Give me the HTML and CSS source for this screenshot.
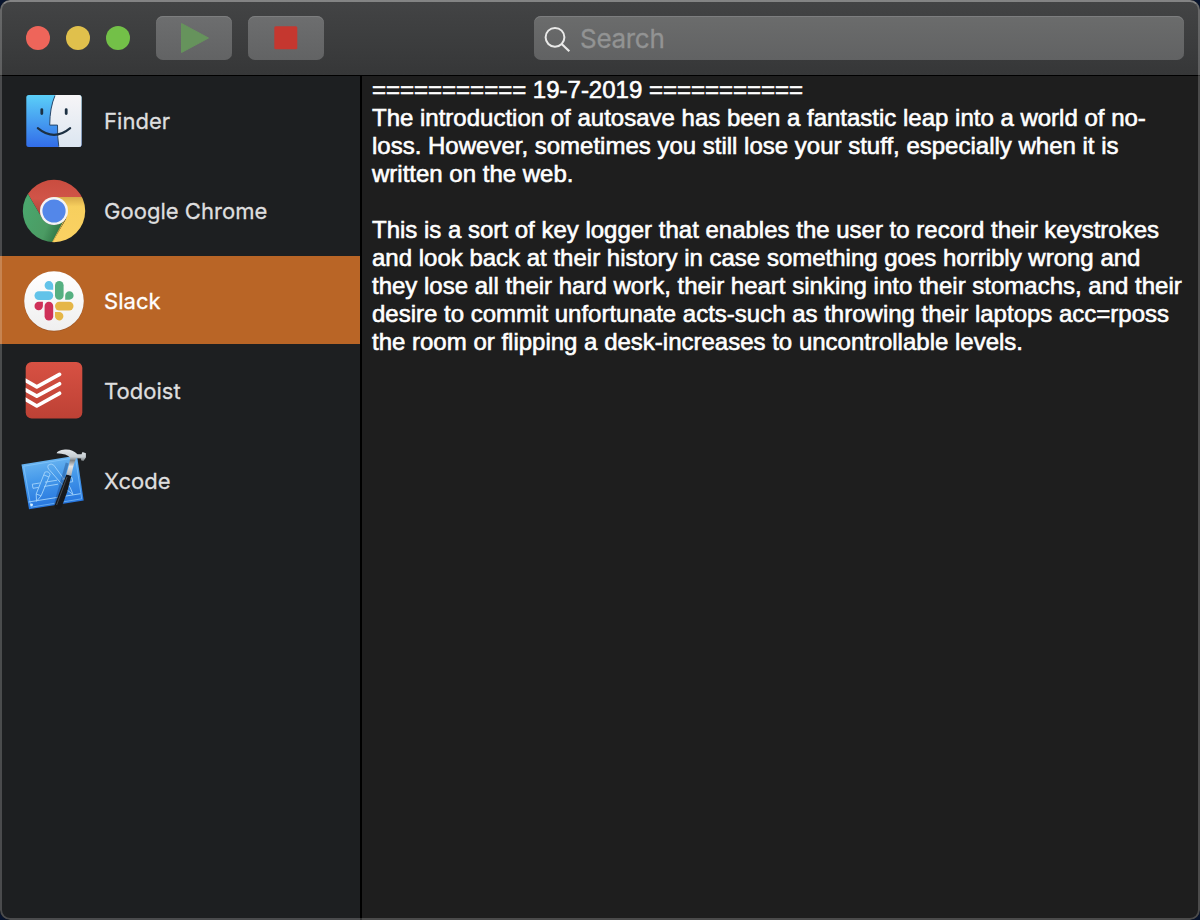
FILE: index.html
```
<!DOCTYPE html>
<html lang="en">
<head>
<meta charset="utf-8">
<title>Keystroke history</title>
<link rel="stylesheet" href="styles.css">
</head>
<body>
<main class="window">
  <header class="toolbar">
    <div class="lights"><i class="light red"></i><i class="light yellow"></i><i class="light green"></i></div>
    <button class="tool" aria-label="Record"><svg width="76" height="44" viewBox="0 0 76 44"><path d="M25.5 7.5 52.5 22 25.5 36.5Z" fill="#66935c" stroke="#66935c" stroke-linejoin="round"/></svg></button>
    <button class="tool" aria-label="Stop"><svg width="76" height="44" viewBox="0 0 76 44"><rect x="26.3" y="10.3" width="23" height="23" rx="1.5" fill="#c5372f"/></svg></button>
    <div class="search">
      <svg width="46" height="44" viewBox="0 0 46 44" fill="none" stroke="#e9e9e8" stroke-width="2"><circle cx="21" cy="21.3" r="9.4"/><path d="m27.7 28 7.6 7.3" stroke-width="2.2"/></svg>
      <span class="placeholder">Search</span>
    </div>
  </header>
  <div class="content">
    <nav class="sidebar">
      <div class="app">
        <svg class="icon" viewBox="0 0 80 80">
          <defs><linearGradient id="fb" x1="0" y1="0" x2="0" y2="1"><stop stop-color="#5bcff8"/><stop offset="1" stop-color="#326de9"/></linearGradient><linearGradient id="fw" x1="0" y1="0" x2="0" y2="1"><stop stop-color="#f6f5f7"/><stop offset="1" stop-color="#dce6f1"/></linearGradient></defs>
          <g transform="translate(0 .6)">
          <rect x="12.3" y="14.3" width="55.2" height="52" rx="2.5" fill="url(#fb)"/>
          <path d="M41.2 14.3H65q2.5 0 2.5 2.5v47q0 2.5-2.5 2.5H44.8q-1.5-9-1.3-21.8h-7.8q.2-18 5.5-30.2Z" fill="url(#fw)"/>
          <path d="M41 15Q35.8 27 35.700 44.500H43.500Q43.300 57 44.800 66" fill="none" stroke="#27476b" stroke-width="1"/>
          <path d="M23.800 47.500Q40 61 56.200 47.500" fill="none" stroke="#1c3043" stroke-width="2.1" stroke-linecap="round"/>
          <path d="M27.800 29v4M52.200 29v4" stroke="#1c3043" stroke-width="2.800" stroke-linecap="round"/>
          </g>
        </svg><span>Finder</span></div>
      <div class="app">
        <svg class="icon" viewBox="0 0 80 80">
          <defs><clipPath id="cc"><circle cx="40" cy="41" r="31.2"/></clipPath>
          <linearGradient id="cr" x1="0" y1="0" x2="0" y2="1"><stop stop-color="#c94c3f"/><stop offset=".5" stop-color="#d05448"/><stop offset="1" stop-color="#a74439"/></linearGradient>
          <linearGradient id="cg" x1="0" y1="0" x2="1" y2=".45"><stop stop-color="#4aaa70"/><stop offset=".75" stop-color="#4b9b63"/><stop offset="1" stop-color="#337a49"/></linearGradient>
          <linearGradient id="cy" x1="0" y1="0" x2="0" y2="1"><stop stop-color="#d7a949"/><stop offset=".2" stop-color="#f7cf5e"/><stop offset="1" stop-color="#fbd263"/></linearGradient></defs>
          <g clip-path="url(#cc)"><path d="M8 9H72V27H40L28 48 14 24Z" fill="url(#cr)"/><path d="M14 24 28 48Q33 56 43 55L50 50 37 75H5V24Z" fill="url(#cg)"/><path d="M40 27H75V75H37L38 73 52 49Q55 36 40 27Z" fill="url(#cy)"/><path d="M52 47 37 75" stroke="#d9b34f" stroke-width="1"/></g>
          <circle cx="40" cy="41" r="14" fill="#f4f4f4"/><circle cx="40" cy="41" r="11.600" fill="#5387e9"/>
        </svg><span>Google Chrome</span></div>
      <div class="app selected">
        <svg class="icon" viewBox="0 0 80 80">
          <defs><linearGradient id="sw" x1="0" y1="0" x2="0" y2="1"><stop stop-color="#fff"/><stop offset="1" stop-color="#efefef"/></linearGradient></defs>
          <circle cx="40" cy="41.500" r="30" fill="#8c4a20" opacity=".6"/><circle cx="40" cy="41" r="29.800" fill="url(#sw)"/>
          <g fill="#62c3e9"><rect x="20.500" y="31.300" width="18.700" height="8.600" rx="4.300"/><path d="M39.200 29.700V25.500a4.300 4.300 0 1 0-4.300 4.200Z"/></g>
          <g fill="#55b081"><rect x="41" y="21" width="8.600" height="18.700" rx="4.300"/><path d="M51.200 39.700h4a4.200 4.200 0 1 0-4-4.200Z"/></g>
          <g fill="#e5b647"><rect x="41" y="41.800" width="18.500" height="8.600" rx="4.300"/><path d="M41 52v4.100a4.200 4.200 0 1 0 4.200-4.100Z"/></g>
          <g fill="#cf3159"><rect x="30.600" y="41.800" width="8.600" height="18.700" rx="4.300"/><path d="M28.900 41.800h-4.100a4.200 4.200 0 1 0 4.100 4.200Z"/></g>
        </svg><span>Slack</span></div>
      <div class="app">
        <svg class="icon" viewBox="0 0 80 80">
          <defs><linearGradient id="tr" x1="0" y1="0" x2="0" y2="1"><stop stop-color="#d75143"/><stop offset="1" stop-color="#bd4135"/></linearGradient><clipPath id="tc"><rect x="11.700" y="12" width="56.600" height="56.600" rx="6"/></clipPath></defs>
          <rect x="11.700" y="12" width="56.600" height="56.600" rx="6" fill="url(#tr)"/><g clip-path="url(#tc)" fill="none" stroke="#fff" stroke-width="3.700" stroke-linejoin="round" stroke-linecap="round"><path d="M10 29.600 22.800 36.800 45.500 24.400M10 39 22.800 46.200 45.500 33.800M10 48.600 22.800 56 45.500 43.300"/></g>
        </svg><span>Todoist</span></div>
      <div class="app">
        <svg class="icon" viewBox="0 0 80 80">
          <defs><linearGradient id="xb" x1="0" y1="0" x2=".2" y2="1"><stop stop-color="#77bff3"/><stop offset=".5" stop-color="#4498ea"/><stop offset="1" stop-color="#2675de"/></linearGradient><linearGradient id="xh" x1="0" y1="0" x2="0" y2="1"><stop stop-color="#e3e7ea"/><stop offset=".28" stop-color="#c6cdd2"/><stop offset=".42" stop-color="#7d8387"/><stop offset=".65" stop-color="#e2e3e3"/><stop offset="1" stop-color="#a9adaf"/></linearGradient></defs>
          <path d="M7.500 24.500 63 15.500 69.700 60.500 15 69.300Z" fill="url(#xb)"/><path d="M9.700 26.200 61.500 17.700 67.700 58.800 17 67.200Z" fill="none" stroke="#8dccff" stroke-width=".6"/>
          <g fill="none" stroke="#a4d4fa" stroke-width=".9"><path d="m14.500 62 52-8.300M18.300 44.200l7.500-1.200M31 42.200l12-2M48 39.200l10-1.500.7 4-8 1.300M44 44.200l-14 2.300M24.500 47.400l-5.500.9-.7-4.100"/><path d="M30.800 32.200 22.200 54l.3 7.300 4.600-5.500 9-21.600q-1.500-3.500-5.300-2ZM30 35l5 2M22.200 54l4.900 1.800"/><path d="M34.200 25.200q3-2.400 5.600 0L56.200 47.500 59 54.500 53 50 34.600 29q-1.500-2-.4-3.800Z"/></g><circle cx="17.600" cy="64.800" r="1.400" fill="#d6efff"/>
          <path d="m53.200 23-12 42" stroke="#143a73" stroke-width="3" opacity=".35"/>
          <path d="m52.300 34.500 5 1.200Q54 52 47.500 67.500q-1.500 2.500-4.500 1.500t-2.300-4Z" fill="#17191d"/><path d="M53 37 42.600 65" stroke="#4c5157" stroke-width=".9" fill="none"/>
          <path d="M42.600 13.200Q43 10.500 51 9.500q7.500-.5 12.500 4.700l4 .1 1-2.200 3.400 1.100v4.300l-2.500 3.500-2.400-.7.200-1.900-5-.2Q59.500 24 57.300 35.700l-5-1.200Q55 26 56.300 18 53 13.500 42.600 13.200Z" fill="url(#xh)"/>
        </svg><span>Xcode</span></div>
    </nav>
    <article class="log">
      <div>=========== 19-7-2019 ===========</div>
      <div>The introduction of autosave has been a fantastic leap into a world of no-</div>
      <div>loss. However, sometimes you still lose your stuff, especially when it is</div>
      <div>written on the web.</div>
      <div>&nbsp;</div>
      <div>This is a sort of key logger that enables the user to record their keystrokes</div>
      <div>and look back at their history in case something goes horribly wrong and</div>
      <div>they lose all their hard work, their heart sinking into their stomachs, and their</div>
      <div>desire to commit unfortunate acts-such as throwing their laptops acc=rposs</div>
      <div>the room or flipping a desk-increases to uncontrollable levels.</div>
    </article>
  </div>
</main>
</body>
</html>
```
FILE: styles.css
```
* { box-sizing: border-box; }
body { margin: 0; background: #08142d; overflow: hidden; }
.window {
  position: relative; width: 1200px; height: 920px; overflow: hidden;
  border-radius: 10px;
  background: #1e1e1e; display: flex; flex-direction: column;
}
/* Translucent window rim, drawn over the content */
.window::after {
  content: ""; position: absolute; inset: 0; pointer-events: none;
  border: 2px solid rgba(255, 255, 255, .2); border-top-color: rgba(255, 255, 255, .34);
  border-radius: 10px;
}
.toolbar {
  height: 76px; flex: none; display: flex; align-items: flex-start;
  padding: 16px 16px 0 26px; border-bottom: 1px solid #000;
  background: linear-gradient(#434445, #363738);
}
.lights { display: flex; gap: 16px; padding-top: 10px; margin-right: 26px; }
.light { width: 24px; height: 24px; border-radius: 50%; }
.red { background: #ee655a; }
.yellow { background: #e0c04c; }
.green { background: #73c048; }
.tool, .search {
  height: 44px; border: 0; border-radius: 7px; padding: 0;
  background: linear-gradient(#6d6e6f, #626364); box-shadow: inset 0 1px #7d7e7f;
}
.tool { width: 76px; margin-right: 16px; }
.tool svg, .search svg { display: block; }
.search { width: 650px; margin-left: auto; display: flex; align-items: center; background: linear-gradient(#6b6c6c, #616263); }
.placeholder {
  font: 26px/44px Inter, sans-serif; color: #929393; letter-spacing: -.3px;
  padding-top: 2px; -webkit-text-stroke: .3px #929393;
}
.content { flex: 1; display: flex; min-height: 0; }
.sidebar {
  width: 362px; flex: none; border-right: 2px solid #000; background: #1d1f21;
  display: flex; flex-direction: column; gap: 2px;
}
.app {
  height: 88px; padding: 4px 0 4px 14px; display: flex; align-items: center; gap: 10px;
  font: 22px/30px Inter, sans-serif; letter-spacing: .03px; color: #dededf;
  -webkit-text-stroke: .3px currentColor;
}
.app span { padding-top: 2px; }
.selected { background: #b96526; color: #fff; }
.icon { width: 80px; height: 80px; flex: none; -webkit-text-stroke: 0; }
.log {
  flex: 1; padding-left: 10px; white-space: nowrap; color: #fff;
  font: 24px/28px "Liberation Sans", Arial, sans-serif; -webkit-text-stroke: .6px #fff;
}
```
